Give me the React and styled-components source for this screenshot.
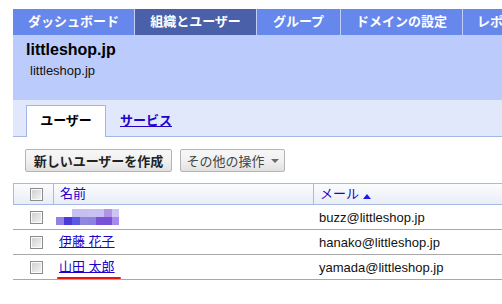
import React from "react";
import styled, { createGlobalStyle } from "styled-components";

const GlobalStyle = createGlobalStyle`
  html, body {
    margin: 0;
    padding: 0;
    background: #ffffff;
    overflow: hidden;
  }
  body {
    font-family: "Liberation Sans", "Noto Sans CJK JP", sans-serif;
    font-size: 13px;
    color: #000;
  }
`;

const Page = styled.div`
  padding: 9px 0 0 13px;
  width: 489px;
`;

const Nav = styled.nav`
  display: flex;
  height: 26px;
  overflow: hidden;
  white-space: nowrap;
`;

const NavTab = styled.div`
  flex: none;
  width: ${(p) => p.$w}px;
  height: 26px;
  line-height: 26px;
  border-right: 1px solid #c2cef7;
  background: ${(p) => (p.$active ? "#4a61a9" : "#6687ec")};
  color: #ffffff;
  font-weight: bold;
  font-size: 13px;
  text-align: center;
`;

const Header = styled.header`
  box-sizing: border-box;
  height: 65px;
  background: #bbcbfc;
  padding: 5px 13px 0;
`;

const Title = styled.div`
  font-size: 16px;
  line-height: 20px;
  font-weight: bold;
`;

const Subtitle = styled.div`
  font-size: 13px;
  line-height: 16px;
  margin: 3px 0 0 4px;
  color: #111;
`;

const TabStrip = styled.div`
  box-sizing: border-box;
  height: 37px;
  display: flex;
  align-items: flex-end;
  padding: 5px 0 0 13px;
  background: #e1e8fc;
  border-bottom: 1px solid #a3b6e7;
`;

const SubTab = styled.div`
  box-sizing: border-box;
  width: 80px;
  height: 32px;
  margin-bottom: -1px;
  background: #ffffff;
  border: 1px solid #a3b6e7;
  border-bottom: none;
  font-weight: bold;
  line-height: 30px;
  text-align: center;
`;

const SubTabLink = styled.a`
  margin-left: 14px;
  line-height: 30px;
  font-weight: bold;
  color: #2200cc;
  text-decoration: underline;
  align-self: center;
`;

const Toolbar = styled.div`
  display: flex;
  gap: 8px;
  padding: 12px 0 0 12px;
`;

const Button = styled.button`
  box-sizing: border-box;
  display: flex;
  align-items: center;
  justify-content: center;
  gap: 6px;
  width: ${(p) => p.$w}px;
  height: 23px;
  padding: 0;
  border: 1px solid #b4b4b4;
  border-radius: 2px;
  background: linear-gradient(#f7f7f7, #f1f1f1 50%, #e1e1e1);
  font-family: inherit;
  font-size: 13px;
  font-weight: ${(p) => (p.$bold ? "bold" : "normal")};
  color: ${(p) => (p.$bold ? "#222" : "#444")};
`;

const Caret = styled.span`
  width: 0;
  height: 0;
  border-left: 4px solid transparent;
  border-right: 4px solid transparent;
  border-top: 4px solid #6a6a6a;
  margin-top: 1px;
`;

const Table = styled.div`
  margin-top: 11px;
`;

const HeadRow = styled.div`
  display: flex;
  height: 22px;
  box-sizing: border-box;
  border-top: 1px solid #a5bbe6;
  border-bottom: 1px solid #a5bbe6;
  border-left: 1px solid #a5bbe6;
  background: linear-gradient(#fbfcfe, #e9edf5);
`;

const Row = styled.div`
  display: flex;
  height: 25px;
  box-sizing: border-box;
  border-bottom: 1px solid #a8a8a8;
`;

const CheckCell = styled.div`
  flex: none;
  box-sizing: border-box;
  width: ${(p) => (p.$head ? 39 : 40)}px;
  display: flex;
  align-items: center;
  padding-left: ${(p) => (p.$head ? 16 : 17)}px;
`;

const NameCell = styled.div`
  position: relative;
  flex: none;
  box-sizing: border-box;
  width: 260px;
  display: flex;
  align-items: center;
  padding-left: 6px;
  border-left: ${(p) => (p.$head ? "1px solid #a5bbe6" : "none")};
`;

const MailCell = styled.div`
  flex: 1;
  display: flex;
  align-items: center;
  gap: 4px;
  padding-left: 6px;
  border-left: ${(p) => (p.$head ? "1px solid #a5bbe6" : "none")};
  color: #111;
  white-space: nowrap;
`;

const HeadLink = styled.a`
  color: #2200cc;
  text-decoration: none;
  line-height: 16px;
`;

const NameLink = styled.a`
  color: #2200cc;
  text-decoration: underline;
  line-height: 16px;
`;

const Check = styled.span`
  box-sizing: border-box;
  display: block;
  width: 13px;
  height: 13px;
  border: 1px solid #8c8c8c;
  box-shadow: inset 0 0 0 1px #fafafa;
  background: linear-gradient(135deg, #cdcdcd, #f6f6f6);
`;

const RedMark = styled.span`
  position: absolute;
  left: 4px;
  top: 22px;
  width: 64px;
  height: 2px;
  border-radius: 1px;
  background: #ee1111;
`;

const MosaicSvg = styled.svg`
  display: block;
  margin-left: -3px;
`;

const mosaic = [
  [null, null, "#c7c0f1", "#c6bff0", "#c8c1f1", "#c7c0f0", "#b194e4", "#ccc4f4"],
  ["#9282e2", "#4a3bd6", "#5b5ae1", "#8f86e2", "#8d84e1", "#7a52d9", "#7b50d8", "#a98aec"],
];

const Mosaic = () => (
  <MosaicSvg width="63" height="16" viewBox="0 0 63 16">
    {mosaic.map((row, r) =>
      row.map((c, i) =>
        c ? <rect key={`${r}-${i}`} x={i * 8} y={r * 8} width="8" height="8" fill={c} /> : null
      )
    )}
  </MosaicSvg>
);

const SortUp = () => (
  <svg width="8" height="5" viewBox="0 0 8 5" style={{ marginTop: 4 }}>
    <polygon points="0,5 4,0 8,5" fill="#1b1bef" />
  </svg>
);

const navTabs = [
  { label: "ダッシュボード", w: 121 },
  { label: "組織とユーザー", w: 121, active: true },
  { label: "グループ", w: 83 },
  { label: "ドメインの設定", w: 121 },
  { label: "レポート", w: 80 },
];

const users = [
  { name: null, mail: "buzz@littleshop.jp" },
  { name: "伊藤 花子", mail: "hanako@littleshop.jp" },
  { name: "山田 太郎", mail: "yamada@littleshop.jp", mark: true },
];

export default function App() {
  return (
    <>
      <GlobalStyle />
      <Page>
        <Nav>
          {navTabs.map((t) => (
            <NavTab key={t.label} $w={t.w} $active={t.active}>
              {t.label}
            </NavTab>
          ))}
        </Nav>
        <Header>
          <Title>littleshop.jp</Title>
          <Subtitle>littleshop.jp</Subtitle>
        </Header>
        <TabStrip>
          <SubTab>ユーザー</SubTab>
          <SubTabLink href="#">サービス</SubTabLink>
        </TabStrip>
        <Toolbar>
          <Button $w={147} $bold>
            新しいユーザーを作成
          </Button>
          <Button $w={105}>
            その他の操作
            <Caret />
          </Button>
        </Toolbar>
        <Table>
          <HeadRow>
            <CheckCell $head>
              <Check />
            </CheckCell>
            <NameCell $head>
              <HeadLink href="#">名前</HeadLink>
            </NameCell>
            <MailCell $head>
              <HeadLink href="#">メール</HeadLink>
              <SortUp />
            </MailCell>
          </HeadRow>
          {users.map((u) => (
            <Row key={u.mail}>
              <CheckCell>
                <Check />
              </CheckCell>
              <NameCell>
                {u.name ? <NameLink href="#">{u.name}</NameLink> : <Mosaic />}
                {u.mark && <RedMark />}
              </NameCell>
              <MailCell>{u.mail}</MailCell>
            </Row>
          ))}
        </Table>
      </Page>
    </>
  );
}
